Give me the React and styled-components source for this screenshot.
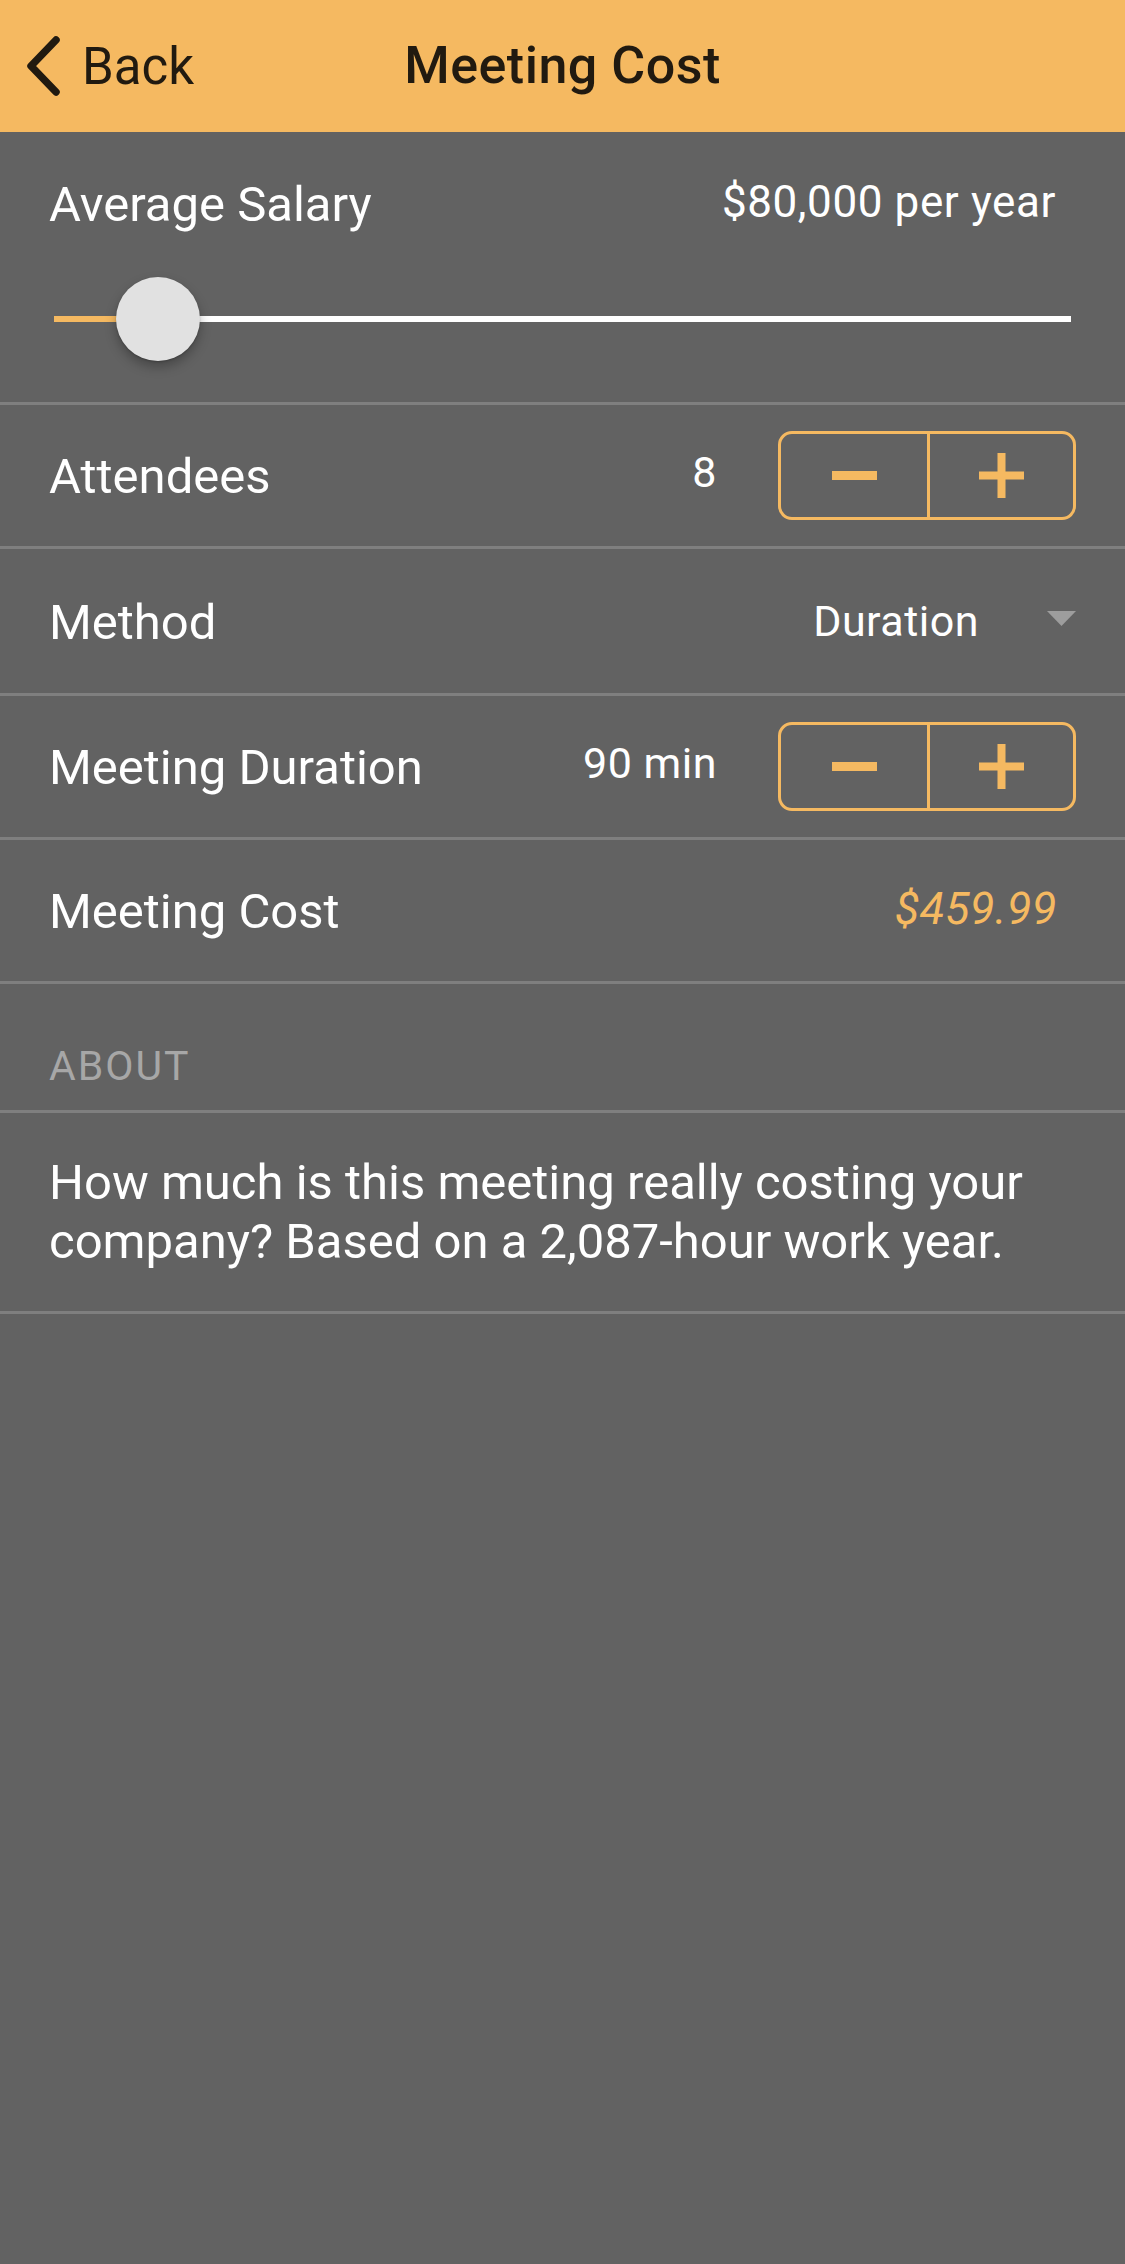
import React from 'react';
import styled, { createGlobalStyle } from 'styled-components';

const ORANGE = '#f5b961';
const LINE = '#7f7f7f';

const GlobalStyle = createGlobalStyle`
  *, *::before, *::after { box-sizing: border-box; }
  html, body { margin: 0; padding: 0; background: #626262; }
  body {
    font-family: Roboto, "Liberation Sans", sans-serif;
    -webkit-font-smoothing: antialiased;
  }
`;

const Page = styled.div`
  min-height: 2264px;
  background: #626262;
  color: #fff;
`;

const NavBar = styled.header`
  height: 132px;
  background: ${ORANGE};
  display: grid;
  grid-template-columns: 1fr auto 1fr;
  align-items: center;
  color: #211a10;
`;

const BackButton = styled.div`
  display: flex;
  align-items: center;
  gap: 22px;
  padding-left: 24px;
  font-size: 51px;
  line-height: 1;
`;

const NavTitle = styled.h1`
  margin: 0;
  font-size: 52px;
  font-weight: 500;
  letter-spacing: 0.5px;
  line-height: 1;
`;

const SalarySection = styled.section`
  padding: 48px 0 41px;
`;

const SalaryHead = styled.div`
  display: flex;
  justify-content: space-between;
  align-items: flex-start;
  padding: 0 69px 0 49px;
`;

const Label = styled.span`
  font-size: 49px;
  line-height: 1;
  color: #fff;
  margin-top: ${(p) => p.$drop || 0}px;
`;

const Value = styled.span`
  font-size: ${(p) => p.$size || 43}px;
  letter-spacing: ${(p) => p.$track || 0.5}px;
  line-height: 1;
  color: #fff;
  margin-bottom: ${(p) => p.$raise || 0}px;
`;

const CostValue = styled.span`
  font-size: 45px;
  letter-spacing: 0.5px;
  line-height: 1;
  font-style: italic;
  color: ${ORANGE};
  margin-bottom: 4px;
`;

const SliderWrap = styled.div`
  position: relative;
  height: 84px;
  margin: 48px 54px 0;
  display: flex;
  align-items: center;
`;

const Track = styled.div`
  width: 100%;
  height: 6px;
  background: #fff;
  display: flex;
`;

const TrackFill = styled.div`
  height: 100%;
  background: ${ORANGE};
`;

const Thumb = styled.div`
  position: absolute;
  top: 0;
  width: 84px;
  height: 84px;
  border-radius: 50%;
  background: #e1e1e1;
  box-shadow: 0 6px 12px rgba(0, 0, 0, 0.28), 0 1px 2px rgba(0, 0, 0, 0.2);
`;

const Row = styled.div`
  height: ${(p) => p.$h || 144}px;
  border-top: 3px solid ${LINE};
  display: flex;
  align-items: center;
  justify-content: space-between;
  padding: 0 ${(p) => p.$right || 49}px 0 49px;
`;

const RightGroup = styled.div`
  display: flex;
  align-items: center;
`;

const Stepper = styled.div`
  margin-left: 61px;
  width: 298px;
  height: 89px;
  border: 3px solid ${ORANGE};
  border-radius: 14px;
  display: grid;
  grid-template-columns: 1fr 1fr;
  overflow: hidden;
`;

const StepButton = styled.button`
  border: none;
  background: transparent;
  padding: 0;
  display: flex;
  align-items: center;
  justify-content: center;
  border-left: ${(p) => (p.$divider ? `3px solid ${ORANGE}` : 'none')};
  cursor: pointer;
`;

const Caret = styled.svg`
  margin-left: 68px;
  margin-bottom: 5px;
`;

const SectionHeader = styled.div`
  height: 129px;
  border-top: 3px solid ${LINE};
  display: flex;
  align-items: flex-end;
  padding: 0 49px 23px;
  font-size: 41px;
  line-height: 1;
  letter-spacing: 2px;
  color: #a7a7a7;
`;

const AboutText = styled.p`
  margin: 0;
  border-top: 3px solid ${LINE};
  border-bottom: 3px solid ${LINE};
  padding: 40px 49px;
  font-size: 49px;
  line-height: 59px;
  color: #fff;
`;

const Minus = () => (
  <svg width="45" height="9" viewBox="0 0 45 9">
    <rect width="45" height="9" fill={ORANGE} />
  </svg>
);

const Plus = () => (
  <svg width="45" height="45" viewBox="0 0 45 45">
    <rect x="0" y="18.5" width="45" height="8" fill={ORANGE} />
    <rect x="18.5" y="0" width="8" height="45" fill={ORANGE} />
  </svg>
);

const StepControl = () => (
  <Stepper>
    <StepButton aria-label="decrease"><Minus /></StepButton>
    <StepButton $divider aria-label="increase"><Plus /></StepButton>
  </Stepper>
);

export default function App() {
  const thumbLeft = 62;

  return (
    <Page>
      <GlobalStyle />
      <NavBar>
        <BackButton>
          <svg width="36" height="60" viewBox="0 0 36 60">
            <path d="M32 4 L7 30 L32 56" fill="none" stroke="#211a10" strokeWidth="7.5" strokeLinecap="round" strokeLinejoin="round" />
          </svg>
          Back
        </BackButton>
        <NavTitle>Meeting Cost</NavTitle>
        <div />
      </NavBar>

      <SalarySection>
        <SalaryHead>
          <Label>Average Salary</Label>
          <Value $size={44} $track={0.6}>$80,000 per year</Value>
        </SalaryHead>
        <SliderWrap>
          <Track>
            <TrackFill style={{ width: thumbLeft + 30 }} />
          </Track>
          <Thumb style={{ left: thumbLeft }} />
        </SliderWrap>
      </SalarySection>

      <Row>
        <Label $drop={2}>Attendees</Label>
        <RightGroup>
          <Value $raise={6}>8</Value>
          <StepControl />
        </RightGroup>
      </Row>

      <Row $h={147}>
        <Label $drop={2}>Method</Label>
        <RightGroup>
          <Value>Duration</Value>
          <Caret width="29" height="15" viewBox="0 0 29 15">
            <path d="M0 0 H29 L14.5 15 Z" fill="#9d9d9d" />
          </Caret>
        </RightGroup>
      </Row>

      <Row>
        <Label $drop={2}>Meeting Duration</Label>
        <RightGroup>
          <Value $raise={6}>90 min</Value>
          <StepControl />
        </RightGroup>
      </Row>

      <Row $right={68}>
        <Label $drop={2}>Meeting Cost</Label>
        <CostValue>$459.99</CostValue>
      </Row>

      <SectionHeader>ABOUT</SectionHeader>
      <AboutText>
        How much is this meeting really costing your company? Based on a 2,087-hour work year.
      </AboutText>
    </Page>
  );
}
